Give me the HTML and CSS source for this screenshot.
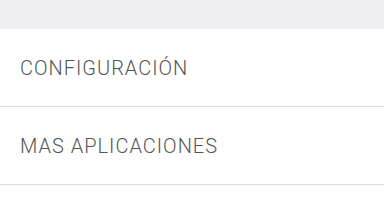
FILE: index.html
```html
<!DOCTYPE html>
<html lang="es">
<head>
    <meta charset="UTF-8">
    <meta name="viewport" content="width=device-width, initial-scale=1.0">
    <title>Menu</title>
    <link rel="stylesheet" href="styles.css">
</head>
<body>
    <div class="top-bar"></div>
    <ul class="menu">
        <li class="menu-item">CONFIGURACIÓN</li>
        <li class="menu-item">MAS APLICACIONES</li>
    </ul>
</body>
</html>
```

FILE: styles.css
```css
body {
    margin: 0;
    background-color: #ffffff;
    font-family: Roboto, "Liberation Sans", sans-serif;
    overflow: hidden;
}

.top-bar {
    height: 29px;
    background-color: #efeff4;
}

.menu {
    list-style: none;
    margin: 0;
    padding: 0;
}

.menu-item {
    display: flex;
    align-items: center;
    height: 77px;
    padding-left: 20px;
    font-size: 20px;
    font-weight: 300;
    letter-spacing: 1px;
    color: #555555;
    border-bottom: 1px solid #dcdcdc;
}
```
